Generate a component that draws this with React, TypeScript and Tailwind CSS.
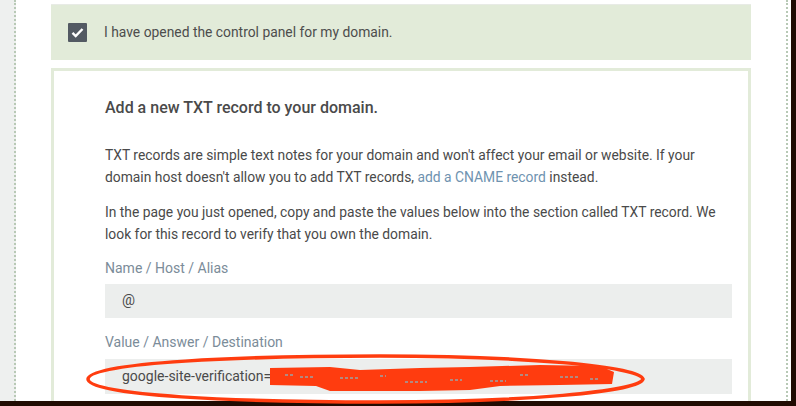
import React from "react";

// ── Annotation overlay: hand-drawn red ellipse + redaction scribble ─────────
function Annotation() {
  return (
    <svg
      className="pointer-events-none absolute left-0 top-0"
      width={796}
      height={406}
      viewBox="0 0 796 406"
    >
      {/* redaction scribble */}
      <path
        d="M270 368 L330 367 L360 370 L420 368 L470 367 L540 365 L600 366 L614 372 L612 384 L560 385 L500 386 L470 390 L420 391 L330 391 L316 386 L270 385 Z"
        fill="#ff3c0f"
      />
      <path
        d="M285 375h10M300 377h14M340 378h20M380 376h6M405 382h22M450 380h12M490 381h16M520 375h10M560 377h18M590 379h8"
        stroke="#9aa3a8"
        strokeWidth={1.5}
        strokeDasharray="3 2"
      />
      {/* ellipse */}
      <path
        d="M88 379 C 88 362, 250 356, 380 356 C 520 356, 640 366, 643 379 C 640 392, 520 402, 380 402 C 240 402, 88 396, 88 379 Z"
        fill="none"
        stroke="#ff3c0f"
        strokeWidth={3.5}
      />
    </svg>
  );
}

function CheckIcon() {
  return (
    <svg width={19} height={19} viewBox="0 0 19 19">
      <rect width={19} height={19} rx={1} fill="#535a63" />
      <path d="M4.5 9.8l3.2 3.2 6.8-7" fill="none" stroke="#fff" strokeWidth={2.4} />
    </svg>
  );
}

export default function App() {
  return (
    <div className="relative flex h-[406px] w-[796px] flex-col overflow-hidden bg-white font-['Roboto',sans-serif]">
      <div className="flex min-h-0 flex-1">
        {/* left page gutter */}
        <div className="w-[16px] shrink-0 border-r-2 border-dotted border-[#b8c9b6] bg-[#eef0ef]" />

        {/* main column */}
        <main className="flex min-w-0 flex-1 flex-col pl-[35px] pr-[35px] pt-[4px]">
          {/* confirmation banner */}
          <div className="flex h-[56px] shrink-0 items-center gap-[17px] border-t border-[#e8ebe6] bg-[#e2ebd9] pl-[17px]">
            <CheckIcon />
            <span className="text-[13.85px] text-[#4d4d4d]">I have opened the control panel for my domain.</span>
          </div>

          {/* record card */}
          <div className="mt-[8px] flex min-h-0 flex-1 flex-col border-x-[3px] border-t-[3px] border-[#e2ebd9] pl-[51px] pr-[16px] pt-[25px]">
            <h2 className="text-[16px] leading-[24px] font-medium text-[#4a4a4a]">
              Add a new TXT record to your domain.
            </h2>
            <p className="mt-[24px] text-[13.85px] leading-[22px] text-[#4a4a4a]">
              TXT records are simple text notes for your domain and won't affect your email or website. If your
              domain host doesn't allow you to add TXT records, <span className="text-[#6f93b0]">add a CNAME record</span> instead.
            </p>
            <p className="mt-[13px] text-[13.85px] leading-[22px] text-[#4a4a4a]">
              In the page you just opened, copy and paste the values below into the section called TXT record. We
              look for this record to verify that you own the domain.
            </p>

            <label className="mt-[13px] text-[14px] leading-[20px] text-[#7b8c99]">Name / Host / Alias</label>
            <div className="mt-[6px] flex h-[34px] shrink-0 items-center bg-[#eceeed] pl-[17px] text-[14.5px] text-[#4a4a4a]">
              @
            </div>

            <label className="mt-[14px] text-[14px] leading-[20px] text-[#7b8c99]">Value / Answer / Destination</label>
            <div className="mt-[7px] flex h-[35px] shrink-0 items-center bg-[#eceeed] pl-[17px] text-[14px] text-[#4a4a4a]">
              google-site-verification=
            </div>
          </div>
        </main>

        {/* right page edge */}
        <div className="flex w-[10px] shrink-0">
          <div className="w-[5px] border-l-2 border-dotted border-[#b8c9b6] bg-white" />
          <div className="flex-1 bg-[#1f0b02]" />
        </div>
      </div>
      <div className="h-[5px] shrink-0 bg-[#210c03]" />

      <Annotation />
    </div>
  );
}
